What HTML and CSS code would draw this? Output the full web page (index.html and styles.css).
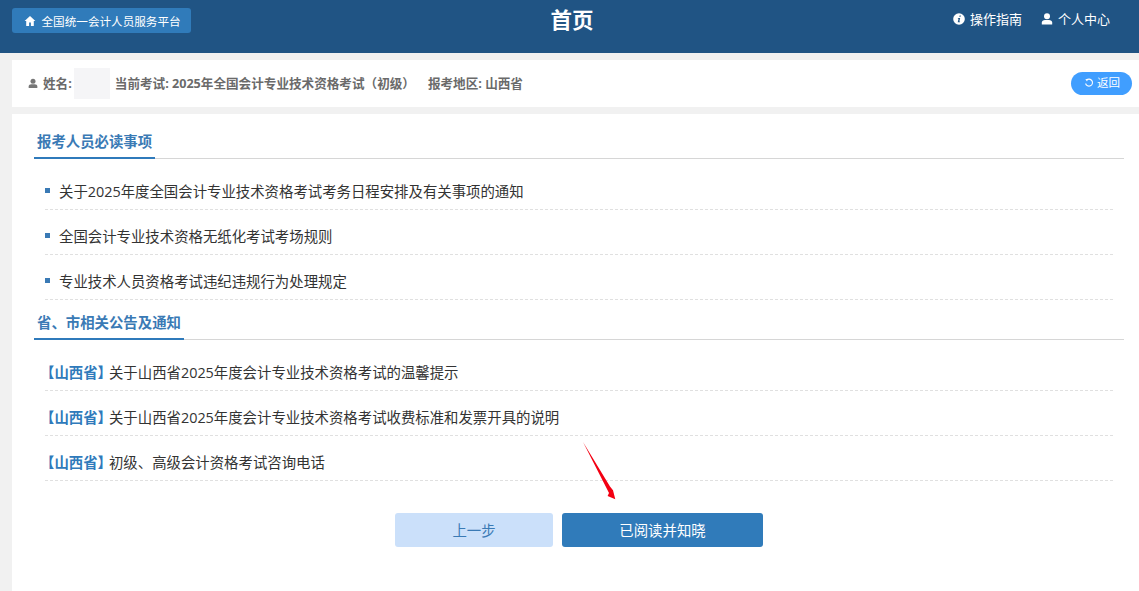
FILE: index.html
```html
<!DOCTYPE html>
<html lang="zh-CN">
<head>
<meta charset="utf-8">
<title>首页</title>
<link rel="stylesheet" href="styles.css">
</head>
<body>
<header class="top">
  <a class="home-btn">
    <svg class="ico12" viewBox="0 0 12 12"><path d="M6 1 .6 6h1.600v5h2.900V7.600h1.800V11h2.900V6h1.600z" fill="#fff"/></svg>
    <span>全国统一会计人员服务平台</span>
  </a>
  <h1 class="title">首页</h1>
  <nav class="top-links">
    <a class="top-link"><svg class="ico12" viewBox="0 0 12 12"><circle cx="6" cy="6" r="5.800" fill="#fff"/><path d="M6.600 2.400h1.300l-.3 1.300H6.300zM5 5h2.200l-.9 3.400h.8l-.2.800H4.700l.9-3.400h-.8z" fill="#205484"/></svg><span class="link-text">操作指南</span></a>
    <a class="top-link"><svg class="ico12" viewBox="0 0 12 12"><circle cx="6" cy="3.200" r="3" fill="#fff"/><path d="M.8 11.400V9.600C.8 8 2.200 7 4 7h4c1.800 0 3.200 1 3.200 2.600v1.800z" fill="#fff"/></svg><span class="link-text">个人中心</span></a>
  </nav>
</header>
<section class="info">
  <svg class="ico-user" viewBox="0 0 12 12"><circle cx="6" cy="3.200" r="3" fill="#777"/><path d="M.8 11.400V9.600C.8 8 2.200 7 4 7h4c1.800 0 3.200 1 3.200 2.600v1.800z" fill="#777"/></svg>
  <span class="info-text">姓名:</span>
  <span class="blur"></span>
  <span class="info-text exam">当前考试: 2025年全国会计专业技术资格考试（初级）</span>
  <span class="info-text region">报考地区: 山西省</span>
  <a class="back"><svg class="ico-back" viewBox="0 0 12 12"><path d="M3 2.600A4.200 4.200 0 1 1 1.900 6.600" fill="none" stroke="#fff" stroke-width="1.300"/><path d="M1.600 1.200 4.600 1.400 3.600 4.200z" fill="#fff"/></svg><span>返回</span></a>
</section>
<main class="content">
  <div class="sec-head"><h2 class="sec-title">报考人员必读事项</h2></div>
  <ul class="list">
    <li class="row"><i class="dot"></i>关于2025年度全国会计专业技术资格考试考务日程安排及有关事项的通知</li>
    <li class="row"><i class="dot"></i>全国会计专业技术资格无纸化考试考场规则</li>
    <li class="row"><i class="dot"></i>专业技术人员资格考试违纪违规行为处理规定</li>
  </ul>
  <div class="sec-head sec-head-next"><h2 class="sec-title">省、市相关公告及通知</h2></div>
  <ul class="list">
    <li class="row"><b class="prov">【山西省】</b>关于山西省2025年度会计专业技术资格考试的温馨提示</li>
    <li class="row"><b class="prov">【山西省】</b>关于山西省2025年度会计专业技术资格考试收费标准和发票开具的说明</li>
    <li class="row"><b class="prov">【山西省】</b>初级、高级会计资格考试咨询电话</li>
  </ul>
  <div class="actions">
    <a class="btn prev">上一步</a>
    <a class="btn next">已阅读并知晓</a>
    <svg class="arrow" viewBox="0 0 34 60"><path d="M0 0 27 44.500 30 48.300 32.300 57.300 24.600 54 26 51z" fill="#f30012"/></svg>
  </div>
</main>
</body>
</html>
```
FILE: styles.css
```css
* { box-sizing: border-box; }
html, body { margin: 0; padding: 0; }
body {
  height: 591px;
  overflow: hidden;
  background: #f1f1f1;
  font-family: "Open Sans", "Noto Sans CJK SC", "Liberation Sans", sans-serif;
  font-size: 13px;
  color: #333;
}
a { text-decoration: none; }
ul { list-style: none; margin: 0; padding: 0; }
h1, h2 { margin: 0; }

.top {
  height: 53px;
  background: #205484;
  color: #fff;
  display: grid;
  grid-template-columns: 1fr auto 1fr;
  align-items: start;
  padding: 8px 7px 0 12px;
}
.home-btn {
  justify-self: start;
  height: 25px;
  width: 179px;
  background: #307bba;
  border-radius: 3px;
  color: #fff;
  display: flex;
  align-items: center;
  gap: 5.500px;
  padding-left: 12px;
  font-size: 11.600px;
  white-space: nowrap;
}
.ico12 { width: 12px; height: 12px; flex: none; }
.title {
  font-size: 21.500px;
  line-height: 24px;
  font-weight: 700;
}
.top-links {
  justify-self: end;
  display: flex;
  gap: 19px;
  padding-right: 22px;
  height: 22px;
}
.top-link {
  display: flex;
  align-items: center;
  gap: 5px;
  color: #fff;
  font-size: 13px;
}
.link-text { padding-bottom: 1px; }
.info {
  margin: 7px 0 0 12px;
  height: 47px;
  background: #fff;
  display: flex;
  align-items: center;
  padding: 0 7px 0 16px;
}
.ico-user { width: 10px; height: 11px; flex: none; margin-right: 5px; }
.info-text { font-size: 12.600px; font-weight: 700; color: #6a6a6a; white-space: nowrap; padding-bottom: 2px; }
.blur { width: 36px; height: 31px; background: #f5f5f7; margin-left: 2px; flex: none; }
.exam { margin-left: 5px; }
.region { margin-left: 13px; }
.back {
  margin-left: auto;
  width: 61px;
  height: 23px;
  border-radius: 12px;
  background: #409eff;
  color: #fff;
  font-size: 11.500px;
  line-height: 20px;
  display: flex;
  align-items: center;
  gap: 3px;
  padding: 0 0 1px 13px;
}
.ico-back { width: 10px; height: 10px; flex: none; }
.content {
  margin: 7px 0 0 12px;
  height: 477px;
  background: #fff;
  padding: 0 15px 0 22px;
}
.sec-head {
  height: 45px;
  border-bottom: 1px solid #d6d6d6;
  display: flex;
  align-items: flex-end;
}
.sec-head-next { height: 40px; }
.sec-title {
  font-size: 14.400px;
  line-height: 20px;
  font-weight: 700;
  color: #3a7ab5;
  padding: 0 3px 5px;
  border-bottom: 2px solid #2f7abb;
  margin-bottom: -1px;
}
.list { padding: 0 11px; }
.row {
  height: 45px;
  border-bottom: 1px dashed #e0e0e0;
  padding-top: 17px;
  line-height: 20px;
  font-size: 14.400px;
  color: #333;
  display: flex;
  align-items: flex-start;
  white-space: nowrap;
}
.list .row:first-child { height: 51px; padding-top: 23px; }
.dot {
  width: 5px;
  height: 5px;
  background: #3a7ab5;
  margin: 6px 9px 0 0;
  flex: none;
}
.prov { color: #2f7abb; font-weight: 700; margin: 0 -3px 0 -5px; }
.actions {
  position: relative;
  display: flex;
  justify-content: center;
  gap: 9px;
  margin-top: 32px;
}
.btn {
  height: 34px;
  border-radius: 3px;
  display: flex;
  align-items: center;
  justify-content: center;
  font-size: 14.400px;
  padding-bottom: 1px;
}
.prev { width: 158px; background: #cbe0fa; color: #3a7ab5; }
.next { width: 201px; background: #307bba; color: #fff; }
.arrow {
  position: absolute;
  left: 549px;
  top: -71px;
  width: 34px;
  height: 60px;
}
```
